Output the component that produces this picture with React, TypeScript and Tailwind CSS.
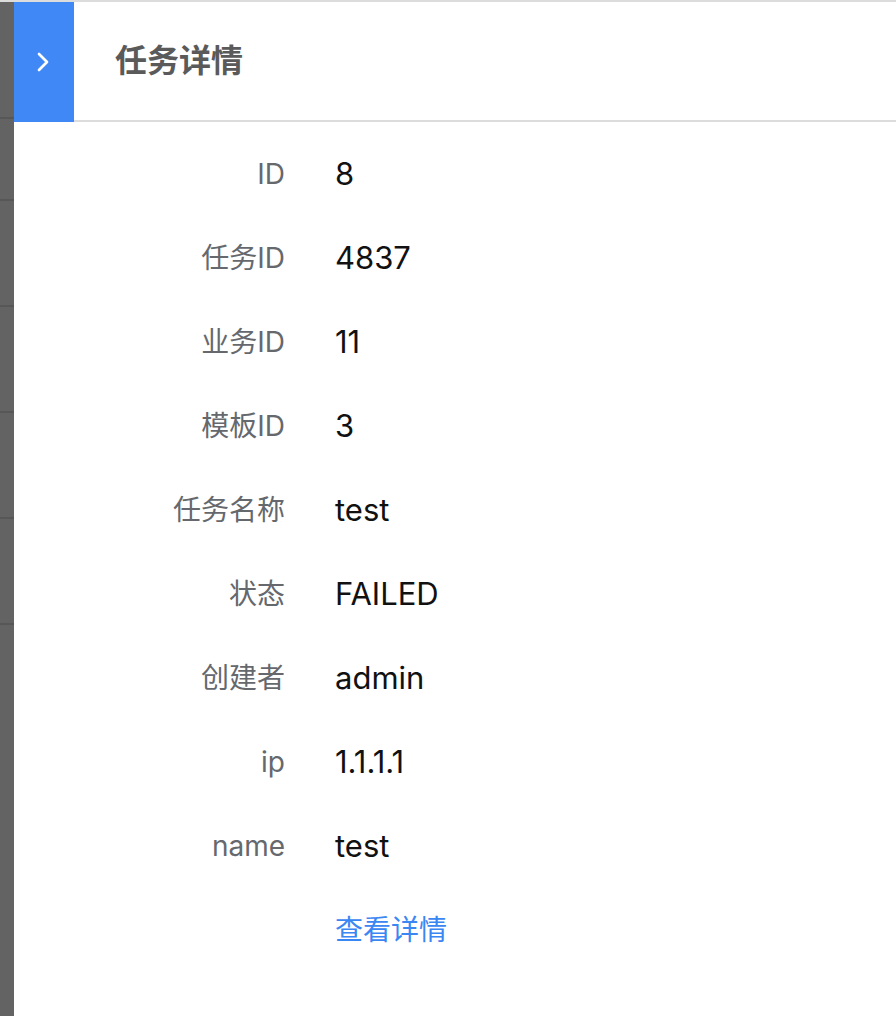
import { ChevronRight } from "lucide-react"

const fields = [
  { label: "ID", value: "8" },
  { label: "任务ID", value: "4837" },
  { label: "业务ID", value: "11" },
  { label: "模板ID", value: "3" },
  { label: "任务名称", value: "test" },
  { label: "状态", value: "FAILED" },
  { label: "创建者", value: "admin" },
  { label: "ip", value: "1.1.1.1" },
  { label: "name", value: "test" },
]

// row borders of the page behind the mask
const stripRows = [117, 82, 106, 106, 106, 106]

export default function App() {
  return (
    <div
      className="flex h-[1016px] w-[896px] overflow-hidden border-t-2 border-[#dcdcdc] bg-white"
      style={{ fontFamily: 'Inter, "Noto Sans CJK SC", sans-serif' }}
    >
      {/* masked page on the left */}
      <div className="flex w-[14px] shrink-0 flex-col bg-[#636363]">
        {stripRows.map((h, i) => (
          <div key={i} className="shrink-0 border-b-2 border-[#575757]" style={{ height: h }} />
        ))}
      </div>

      <div className="flex flex-1 flex-col">
        {/* Header */}
        <div className="flex h-[120px] shrink-0">
          <button className="flex h-full w-[60px] shrink-0 items-center justify-center bg-[#3f88f6] pr-[3px] text-white">
            <ChevronRight size={32} strokeWidth={2} />
          </button>
          <div className="flex flex-1 items-center border-b-2 border-[#dcdcdc] pl-[41px]">
            <h2 className="text-[32px] font-bold text-[#5a5a5a]">任务详情</h2>
          </div>
        </div>

        {/* Detail rows */}
        <div className="flex flex-col pt-[10px]">
          {fields.map((f) => (
            <div key={f.label} className="flex h-[84px] items-center">
              <span className="w-[271px] shrink-0 text-right text-[28px] text-[#65686d]">{f.label}</span>
              <span className="pl-[50px] text-[31px] text-[#111111]">{f.value}</span>
            </div>
          ))}
          <div className="flex h-[84px] items-center">
            <span className="w-[271px] shrink-0" />
            <a href="#" className="pl-[50px] text-[28px] text-[#3a86f2]">
              查看详情
            </a>
          </div>
        </div>
      </div>
    </div>
  )
}
